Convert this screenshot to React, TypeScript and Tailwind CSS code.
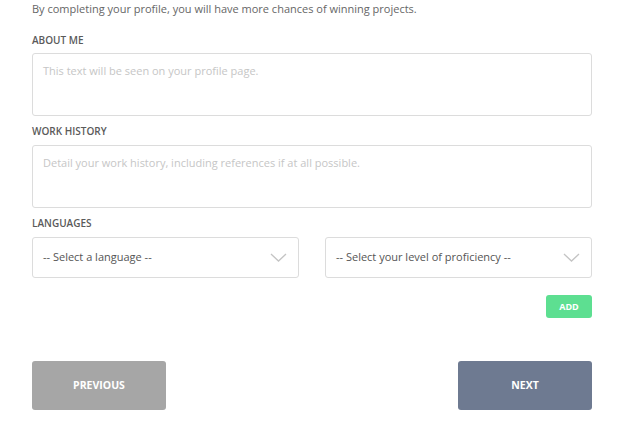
import React from "react";

function Chevron() {
  return (
    <svg width="17" height="9" viewBox="0 0 17 9" fill="none" className="shrink-0">
      <path d="M1 1L8.5 8L16 1" stroke="#c4c4c4" strokeWidth="1.3" />
    </svg>
  );
}

function Select({ text }: { text: string }) {
  return (
    <div className="flex h-[41px] items-center justify-between rounded-[3px] border border-[#dcdcdc] bg-white pl-[10px] pr-[11px]">
      <span className="text-[11px] text-[#555]">{text}</span>
      <Chevron />
    </div>
  );
}

export default function App() {
  return (
    <div
      className="h-[428px] w-[624px] bg-white px-[32px] text-[#555]"
      style={{ fontFamily: '"Open Sans", sans-serif' }}
    >
      <p className="pt-[1px] text-[11px] leading-[16px] text-[#666]">
        By completing your profile, you will have more chances of winning projects.
      </p>
      <div className="mt-[16px] text-[10px] font-semibold leading-[14px] text-[#5a5a5a]">ABOUT ME</div>
      <div className="mt-[6px] h-[63px] rounded-[3px] border border-[#dcdcdc] px-[10px] pt-[9px] text-[11px] text-[#c6c6c6]">
        This text will be seen on your profile page.
      </div>
      <div className="mt-[8px] text-[10px] font-semibold leading-[14px] text-[#5a5a5a]">WORK HISTORY</div>
      <div className="mt-[7px] h-[63px] rounded-[3px] border border-[#dcdcdc] px-[10px] pt-[9px] text-[11px] text-[#c6c6c6]">
        Detail your work history, including references if at all possible.
      </div>
      <div className="mt-[8px] text-[10px] font-semibold leading-[14px] text-[#5a5a5a]">LANGUAGES</div>
      <div className="mt-[7px] grid grid-cols-2 gap-[26px]">
        <Select text="-- Select a language --" />
        <Select text="-- Select your level of proficiency --" />
      </div>
      <div className="mt-[17px] flex justify-end">
        <button className="h-[23px] w-[46px] rounded-[3px] bg-[#5ddf91] text-[9px] font-bold text-white">
          ADD
        </button>
      </div>
      <div className="mt-[43px] flex justify-between">
        <button className="h-[49px] w-[134px] rounded-[3px] bg-[#a6a6a6] text-[10.5px] font-bold text-white">
          PREVIOUS
        </button>
        <button className="h-[49px] w-[134px] rounded-[3px] bg-[#6e7a91] text-[10.5px] font-bold text-white">
          NEXT
        </button>
      </div>
    </div>
  );
}
